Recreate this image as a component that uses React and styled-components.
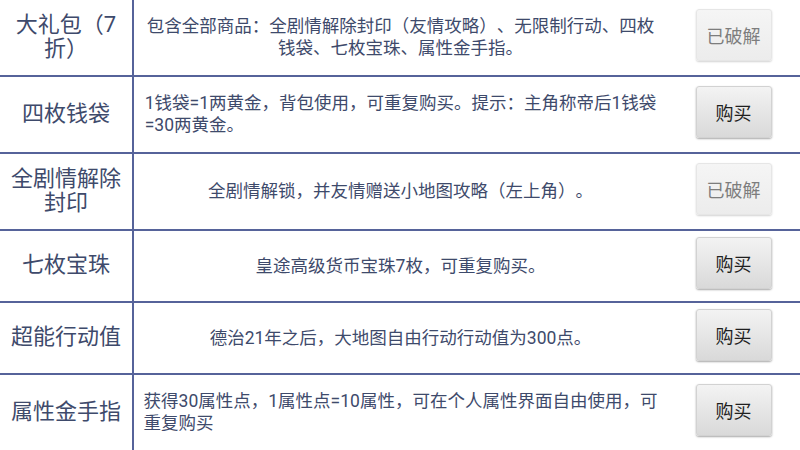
import React from "react";
import styled, { createGlobalStyle } from "styled-components";

const items = [
  {
    name: "大礼包（7折）",
    lines: ["包含全部商品：全剧情解除封印（友情攻略）、无限制行动、四枚", "钱袋、七枚宝珠、属性金手指。"],
    align: "center",
    done: true,
    height: 77,
  },
  {
    name: "四枚钱袋",
    lines: ["1钱袋=1两黄金，背包使用，可重复购买。提示：主角称帝后1钱袋", "=30两黄金。"],
    align: "left",
    height: 77,
  },
  {
    name: "全剧情解除封印",
    lines: ["全剧情解锁，并友情赠送小地图攻略（左上角）。"],
    align: "center",
    done: true,
    height: 77,
  },
  {
    name: "七枚宝珠",
    lines: ["皇途高级货币宝珠7枚，可重复购买。"],
    align: "center",
    height: 72,
  },
  {
    name: "超能行动值",
    lines: ["德治21年之后，大地图自由行动行动值为300点。"],
    align: "center",
    height: 72,
  },
  {
    name: "属性金手指",
    lines: ["获得30属性点，1属性点=10属性，可在个人属性界面自由使用，可", "重复购买"],
    align: "left",
    height: 77,
  },
];

function App() {
  return (
    <>
      <GlobalStyle />
      <Table>
        {items.map((item) => (
          <Row key={item.name} $height={item.height}>
            <NameCell>{item.name}</NameCell>
            <DescCell>
              <DescText $align={item.align}>
                {item.lines.map((l, i) => (
                  <span key={i}>
                    {l}
                    {i < item.lines.length - 1 && <br />}
                  </span>
                ))}
              </DescText>
            </DescCell>
            <ButtonCell>
              <ShopButton $done={item.done}>{item.done ? "已破解" : "购买"}</ShopButton>
            </ButtonCell>
          </Row>
        ))}
      </Table>
    </>
  );
}

export default App;

const GlobalStyle = createGlobalStyle`
  html, body {
    margin: 0;
    padding: 0;
    background: #ffffff;
    overflow: hidden;
  }
  body {
    font-family: "Roboto", "Noto Sans CJK SC", sans-serif;
    text-spacing-trim: space-all;
  }
`;

const Table = styled.div`
  width: 800px;
  height: 450px;
  overflow: hidden;
  display: flex;
  flex-direction: column;
`;

const Row = styled.div`
  display: flex;
  flex-direction: row;
  flex-shrink: 0;
  box-sizing: border-box;
  height: ${(p) => p.$height}px;
  border-bottom: 2px solid #56639a;
`;

const NameCell = styled.div`
  box-sizing: border-box;
  width: 134px;
  flex-shrink: 0;
  padding: 0 8px 2px;
  border-right: 2px solid #56639a;
  display: flex;
  align-items: center;
  justify-content: center;
  text-align: center;
  color: #3e4a6b;
  font-size: 22px;
  line-height: 24px;
`;

const DescCell = styled.div`
  flex: 1;
  display: flex;
  align-items: center;
  justify-content: center;
  padding-bottom: 1px;
`;

const DescText = styled.div`
  display: inline-block;
  text-align: ${(p) => p.$align};
  color: #3e4a6b;
  font-size: 17.5px;
  line-height: 22px;
  white-space: nowrap;
  text-spacing-trim: space-all;
`;

const ButtonCell = styled.div`
  width: 133px;
  flex-shrink: 0;
  display: flex;
  align-items: center;
  justify-content: center;
  padding-bottom: 6px;
`;

const ShopButton = styled.div`
  box-sizing: border-box;
  width: 76px;
  height: 52px;
  display: flex;
  align-items: center;
  justify-content: center;
  border-radius: 3px;
  font-size: 18px;
  color: ${(p) => (p.$done ? "#7d7d7d" : "#1f1f1f")};
  background: ${(p) =>
    p.$done
      ? "linear-gradient(#f5f5f5, #ececec)"
      : "linear-gradient(#f3f3f3, #d9d9d9)"};
  border: 1px solid ${(p) => (p.$done ? "#e6e6e6" : "#d2d2d2")};
  box-shadow: 0 1px 2px rgba(0, 0, 0, ${(p) => (p.$done ? 0.18 : 0.35)});
`;
